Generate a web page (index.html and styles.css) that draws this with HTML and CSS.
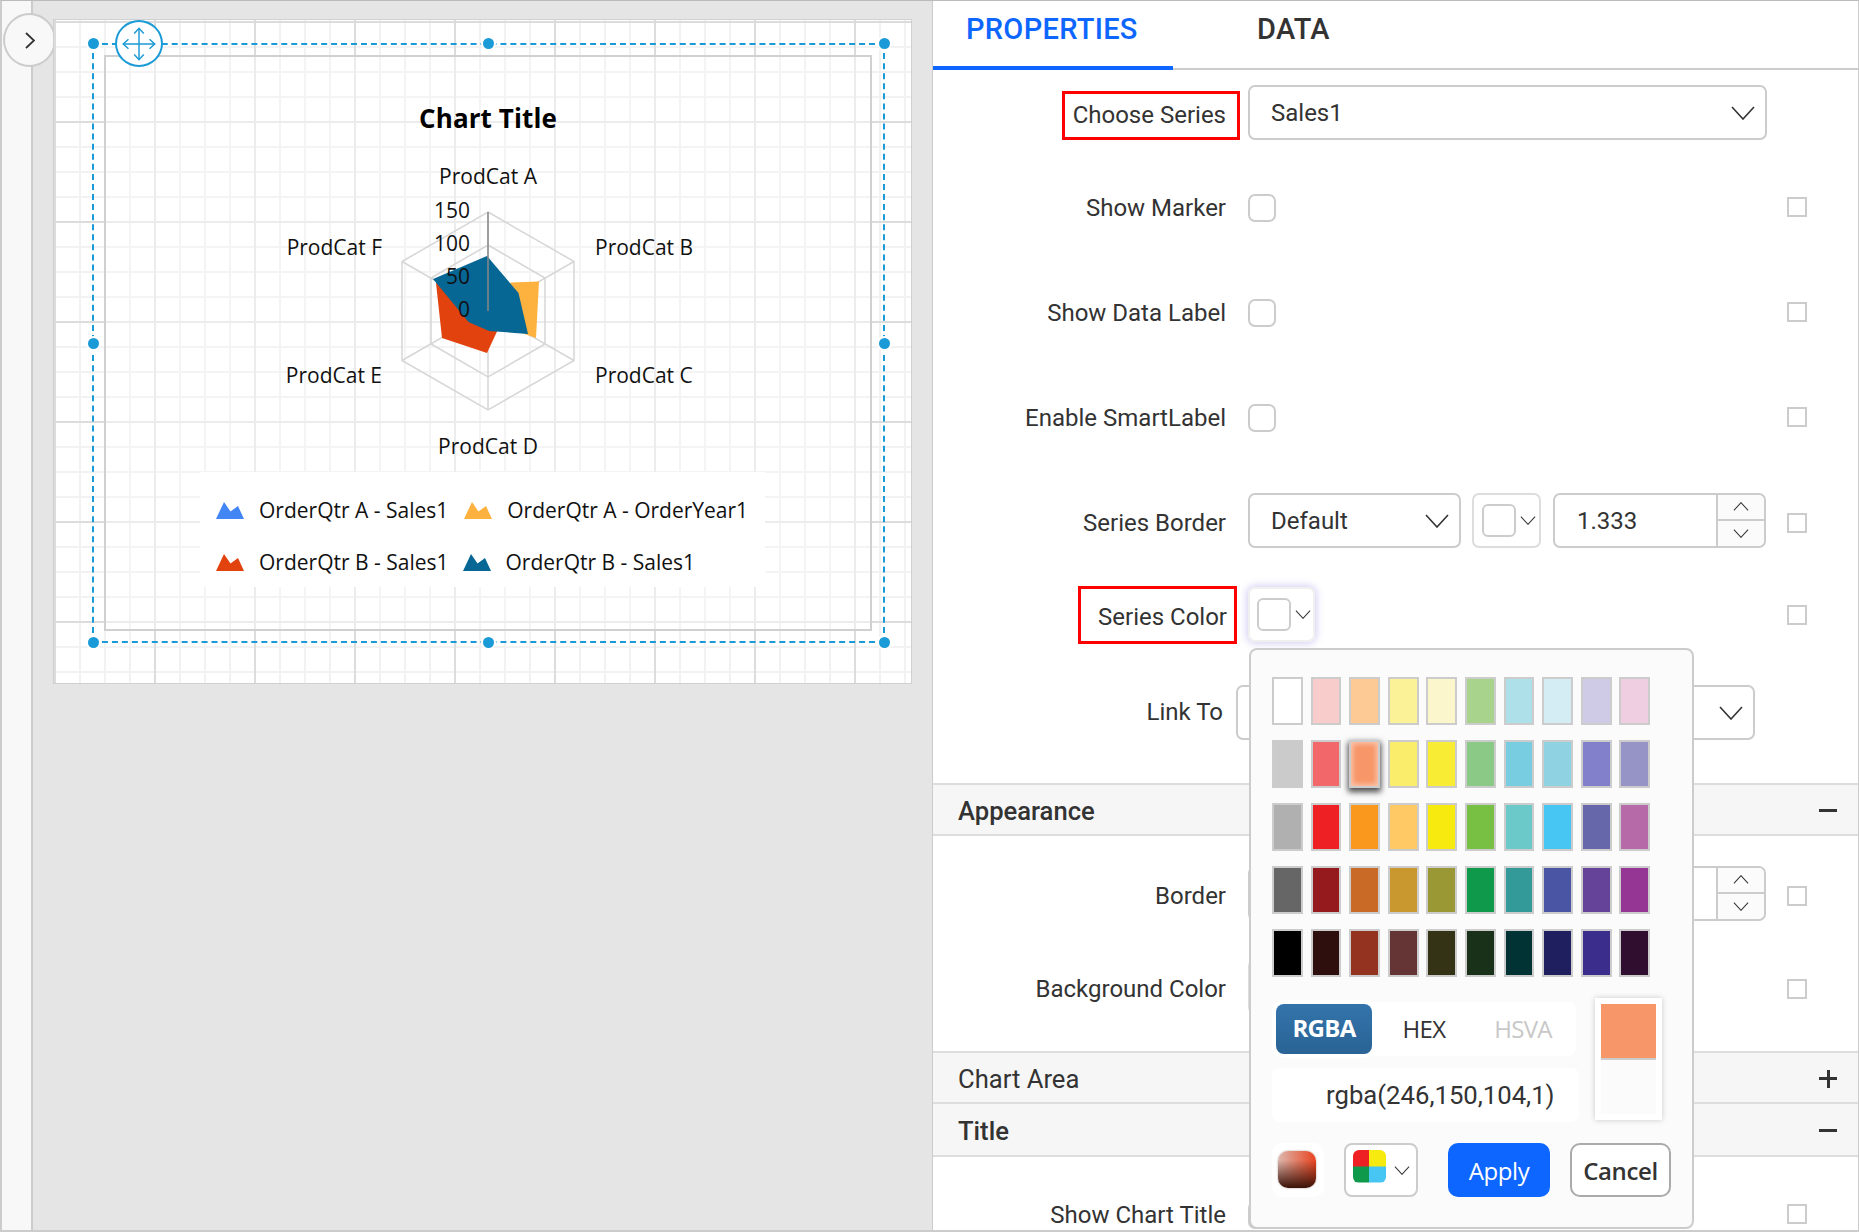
FILE: index.html
```html
<!DOCTYPE html>
<html lang="en">
<head>
    <meta charset="UTF-8">
    <title>Chart Properties</title>
    <link rel="stylesheet" href="styles.css">
</head>
<body>
    <svg class="defs" width="0" height="0">
        <symbol id="chev" viewBox="0 0 24 14"><polyline points="1,1 12,13 23,1" fill="none" stroke="currentColor" stroke-width="1.6"/></symbol>
        <symbol id="mount" viewBox="0 0 28 17"><polygon points="0,17 8,0 14.5,9.5 22,4 28,17" fill="currentColor"/></symbol>
    </svg>
    <div class="app">
        <div class="rail"></div>
        <button class="toggle" type="button"><svg width="10" height="17" viewBox="0 0 10 17"><polyline points="1,1 9,8.5 1,16" fill="none" stroke="#333" stroke-width="1.8"/></svg></button>
        <main class="stage">
            <div class="canvas">
                <div class="page"></div>
                <svg class="chart" width="857" height="663" viewBox="54 20 857 663">
                    <text class="chart-title" x="488" y="128" text-anchor="middle">Chart Title</text>
                    <g class="radar-grid">
                        <polygon points="488,212 574,261.5 574,360.5 488,410 402,360.5 402,261.5"/>
                        <polygon points="488,245 545,278 545,344 488,377 431,344 431,278"/>
                        <line x1="488" y1="212" x2="488" y2="410"/>
                        <line x1="402" y1="261.5" x2="574" y2="360.5"/>
                        <line x1="402" y1="360.5" x2="574" y2="261.5"/>
                    </g>
                    <polygon fill="#fdb240" points="488,300 511,282.5 539,281.5 536,338 500,325"/>
                    <polygon fill="#e2420d" points="436,283 442,338 487,353 500,325 480,290"/>
                    <polygon fill="#066694" points="487,256 518.5,293 528,334 489,331 468.5,322 433,279"/>
                    <line class="radar-axis" x1="488" y1="212" x2="488" y2="311"/>
                    <g class="chart-text">
                        <text x="488" y="184" text-anchor="middle">ProdCat A</text>
                        <text x="595" y="255">ProdCat B</text>
                        <text x="595" y="383">ProdCat C</text>
                        <text x="488" y="454" text-anchor="middle">ProdCat D</text>
                        <text x="382" y="383" text-anchor="end">ProdCat E</text>
                        <text x="382" y="255" text-anchor="end">ProdCat F</text>
                        <text x="470" y="218" text-anchor="end">150</text>
                        <text x="470" y="251" text-anchor="end">100</text>
                        <text x="470" y="284" text-anchor="end">50</text>
                        <text x="470" y="317" text-anchor="end">0</text>
                    </g>
                </svg>
                <div class="legend">
                    <div class="legend-row">
                        <span class="legend-item"><svg class="marker c-blue"><use href="#mount"/></svg>OrderQtr A - Sales1</span>
                        <span class="legend-item"><svg class="marker c-amber"><use href="#mount"/></svg>OrderQtr A - OrderYear1</span>
                    </div>
                    <div class="legend-row tight">
                        <span class="legend-item"><svg class="marker c-red"><use href="#mount"/></svg>OrderQtr B - Sales1</span>
                        <span class="legend-item"><svg class="marker c-teal"><use href="#mount"/></svg>OrderQtr B - Sales1</span>
                    </div>
                </div>
                <div class="selection">
                    <i class="handle h-tl"></i><i class="handle h-tc"></i><i class="handle h-tr"></i>
                    <i class="handle h-ml"></i><i class="handle h-mr"></i>
                    <i class="handle h-bl"></i><i class="handle h-bc"></i><i class="handle h-br"></i>
                </div>
                <div class="mover">
                    <svg width="46" height="46" viewBox="0 0 46 46">
                        <g fill="none" stroke="#1a9ad6" stroke-width="1.5">
                            <path d="M23 7V39M7 23H39"/>
                            <path d="M18 12L23 6.500L28 12M18 34L23 39.500L28 34M12 18L6.500 23L12 28M34 18L39.500 23L34 28"/>
                        </g>
                    </svg>
                </div>
            </div>
        </main>

        <aside class="panel">
            <div class="tabs">
                <div class="tab active">PROPERTIES</div>
                <div class="tab">DATA</div>
            </div>

            <div class="rows">
                <div class="row">
                    <label class="label"><span class="mark mark-choose">Choose Series</span></label>
                    <div class="select wide">Sales1<svg class="chev"><use href="#chev"/></svg></div>
                </div>
                <div class="row">
                    <label class="label">Show Marker</label>
                    <span class="toggle-box"></span>
                    <span class="check"></span>
                </div>
                <div class="row">
                    <label class="label">Show Data Label</label>
                    <span class="toggle-box"></span>
                    <span class="check"></span>
                </div>
                <div class="row">
                    <label class="label">Enable SmartLabel</label>
                    <span class="toggle-box"></span>
                    <span class="check"></span>
                </div>
                <div class="row">
                    <label class="label low">Series Border</label>
                    <div class="select narrow">Default<svg class="chev"><use href="#chev"/></svg></div>
                    <div class="color-btn"><span class="swatch-box"></span><svg class="chev-sm"><use href="#chev"/></svg></div>
                    <div class="spinner">
                        <span class="spin-value">1.333</span>
                        <span class="spin-btns"><span><svg class="chev-sm flip"><use href="#chev"/></svg></span><span><svg class="chev-sm"><use href="#chev"/></svg></span></span>
                    </div>
                    <span class="check low"></span>
                </div>
                <div class="row">
                    <label class="label"><span class="mark mark-color">Series Color</span></label>
                    <div class="color-btn focus"><span class="swatch-box"></span><svg class="chev-sm"><use href="#chev"/></svg></div>
                    <span class="check mid"></span>
                </div>
                <div class="row row-link">
                    <label class="label">Link To</label>
                    <div class="select link"><svg class="chev"><use href="#chev"/></svg></div>
                </div>
            </div>

            <div class="section strong"><span>Appearance</span><i class="minus"></i></div>
            <div class="rows rows-appearance">
                <div class="row">
                    <label class="label low">Border</label>
                    <div class="select narrow">Default<svg class="chev"><use href="#chev"/></svg></div>
                    <div class="color-btn"><span class="swatch-box"></span><svg class="chev-sm"><use href="#chev"/></svg></div>
                    <div class="spinner">
                        <span class="spin-value">1</span>
                        <span class="spin-btns"><span><svg class="chev-sm flip"><use href="#chev"/></svg></span><span><svg class="chev-sm"><use href="#chev"/></svg></span></span>
                    </div>
                    <span class="check low"></span>
                </div>
                <div class="row">
                    <label class="label low">Background Color</label>
                    <div class="color-btn"><span class="swatch-box"></span><svg class="chev-sm"><use href="#chev"/></svg></div>
                    <span class="check low"></span>
                </div>
            </div>
            <div class="section"><span>Chart Area</span><i class="plus"></i></div>
            <div class="section strong"><span>Title</span><i class="minus"></i></div>
            <div class="rows rows-title">
                <div class="row">
                    <label class="label">Show Chart Title</label>
                    <span class="toggle-box"></span>
                    <span class="check"></span>
                </div>
            </div>

            <div class="picker">
                <div class="palette">
                    <span class="sw" style="background:#ffffff"></span><span class="sw" style="background:#f9cccc"></span><span class="sw" style="background:#fdca96"></span><span class="sw" style="background:#fbf197"></span><span class="sw" style="background:#fcf6cd"></span><span class="sw" style="background:#a8d38d"></span><span class="sw" style="background:#aee0e9"></span><span class="sw" style="background:#d4ecf3"></span><span class="sw" style="background:#cfcbe6"></span><span class="sw" style="background:#efcee2"></span>
                    <span class="sw" style="background:#cbcbcb"></span><span class="sw" style="background:#f2676a"></span><span class="sw selected" style="background:#f79668"></span><span class="sw" style="background:#f9ed6b"></span><span class="sw" style="background:#f8ec34"></span><span class="sw" style="background:#8bc987"></span><span class="sw" style="background:#78cde0"></span><span class="sw" style="background:#8fd3e2"></span><span class="sw" style="background:#827fcb"></span><span class="sw" style="background:#9694c7"></span>
                    <span class="sw" style="background:#b0b0b0"></span><span class="sw" style="background:#ee2024"></span><span class="sw" style="background:#fa981d"></span><span class="sw" style="background:#ffc966"></span><span class="sw" style="background:#f6ea0e"></span><span class="sw" style="background:#78c044"></span><span class="sw" style="background:#6bc9c9"></span><span class="sw" style="background:#48c6f3"></span><span class="sw" style="background:#6666aa"></span><span class="sw" style="background:#b66ba8"></span>
                    <span class="sw" style="background:#666666"></span><span class="sw" style="background:#941a1e"></span><span class="sw" style="background:#c96a27"></span><span class="sw" style="background:#c9982f"></span><span class="sw" style="background:#999835"></span><span class="sw" style="background:#0e9a4a"></span><span class="sw" style="background:#339999"></span><span class="sw" style="background:#4a55a4"></span><span class="sw" style="background:#654399"></span><span class="sw" style="background:#963694"></span>
                    <span class="sw" style="background:#000000"></span><span class="sw" style="background:#2e0f0e"></span><span class="sw" style="background:#94331f"></span><span class="sw" style="background:#653434"></span><span class="sw" style="background:#353315"></span><span class="sw" style="background:#183118"></span><span class="sw" style="background:#023334"></span><span class="sw" style="background:#1f1e5f"></span><span class="sw" style="background:#3b2d8b"></span><span class="sw" style="background:#2f0e30"></span>
                </div>
                <div class="value-area">
                    <div class="value-left">
                        <div class="modes">
                            <span class="mode active">RGBA</span>
                            <span class="mode">HEX</span>
                            <span class="mode off">HSVA</span>
                        </div>
                        <div class="value-input">rgba(246,150,104,1)</div>
                    </div>
                    <div class="preview"><span class="preview-new"></span></div>
                </div>
                <div class="picker-foot">
                    <span class="grad-btn"><i class="grad-icon"></i></span>
                    <span class="pal-btn"><i class="pal-icon"></i><svg class="chev-sm"><use href="#chev"/></svg></span>
                    <button class="btn-apply" type="button">Apply</button>
                    <button class="btn-cancel" type="button">Cancel</button>
                </div>
            </div>
        </aside>
    </div>
</body>
</html>
```

FILE: styles.css
```css
* {
    box-sizing: border-box;
}
html, body {
    margin: 0;
    height: 100%;
    overflow: hidden;
}
body {
    font-family: Roboto, sans-serif;
    color: #333;
    background: #e5e5e5;
}
.defs {
    position: absolute;
}
.app {
    position: relative;
    display: flex;
    width: 1859px;
    height: 1232px;
    overflow: hidden;
    border-top: 1px solid #bbb;
    border-bottom: 2px solid #ccc;
    border-left: 2px solid #ccc;
    border-right: 1px solid #ccc;
}

/* left side */
.rail {
    width: 31px;
    flex: none;
    background: #f8f8f8;
    border-right: 2px solid #ccc;
}
.toggle {
    position: absolute;
    left: 1px;
    top: 12px;
    width: 53px;
    height: 54px;
    padding: 0;
    display: flex;
    align-items: center;
    justify-content: center;
    border: 2px solid #ccc;
    border-radius: 50%;
    background: #f8f8f8;
}
.stage {
    width: 899px;
    flex: none;
    padding: 19px 0 0 21px;
    background: #e5e5e5;
}
.canvas {
    position: relative;
    width: 857px;
    height: 663px;
    background-color: #fff;
    background-image:
        linear-gradient(to right, #dcdcdc 2px, transparent 2px),
        linear-gradient(to bottom, #dcdcdc 2px, transparent 2px),
        linear-gradient(to right, #f2f2f2 2px, transparent 2px),
        linear-gradient(to bottom, #f2f2f2 2px, transparent 2px);
    background-size: 100px 100%, 100% 100px, 25px 100%, 100% 25px;
    background-position: 0 0, 0 1px, 0 0, 0 1px;
    box-shadow: 0 0 0 1px #d0d0d0;
}
.page {
    position: absolute;
    left: 50px;
    top: 35px;
    width: 768px;
    height: 576px;
    border: 2px solid #d0d0d0;
    background-color: #fff;
    background-image:
        linear-gradient(to right, #ececec 2px, transparent 2px),
        linear-gradient(to bottom, #ececec 2px, transparent 2px),
        linear-gradient(to right, #f4f4f4 2px, transparent 2px),
        linear-gradient(to bottom, #f4f4f4 2px, transparent 2px);
    background-size: 100px 100%, 100% 100px, 25px 100%, 100% 25px;
    background-position: -52px 0, 0 -36px, -2px 0, 0 -11px;
}
.chart {
    position: absolute;
    left: 0;
    top: 0;
}
.chart-title {
    font: 700 26px "Open Sans", sans-serif;
    letter-spacing: 0.1px;
    fill: #000;
}
.chart-text text {
    font: 400 21px "Open Sans", sans-serif;
    fill: #111;
}
.radar-grid {
    fill: none;
    stroke: #d6d6d6;
    stroke-width: 1.500;
}
.radar-axis {
    stroke: #888;
    stroke-width: 1.500;
}
.legend {
    position: absolute;
    left: 146px;
    top: 452px;
    width: 565px;
    height: 115px;
    padding-top: 12px;
    background: #fff;
}
.legend-row {
    display: flex;
    align-items: center;
    gap: 16px;
    height: 52px;
    padding-left: 16px;
    font: 400 21px "Open Sans", sans-serif;
    color: #111;
}
.legend-row.tight {
    gap: 14px;
}
.legend-item {
    display: flex;
    align-items: center;
    gap: 15px;
}
.marker {
    width: 28px;
    height: 17px;
}
.c-blue { color: #4285f4; }
.c-amber { color: #fdb240; }
.c-red { color: #e2420d; }
.c-teal { color: #066694; }
.selection {
    position: absolute;
    left: 38px;
    top: 23px;
    width: 793px;
    height: 600px;
    border: 2px dashed #1a9ad6;
}
.handle {
    position: absolute;
    width: 11px;
    height: 11px;
    border-radius: 50%;
    background: #1a9ad6;
    box-shadow: 0 0 0 2px #fff;
}
.h-tl, .h-tc, .h-tr { top: -7px; }
.h-ml, .h-mr { top: 292.500px; }
.h-bl, .h-bc, .h-br { bottom: -7px; }
.h-tl, .h-ml, .h-bl { left: -6px; }
.h-tc, .h-bc { left: 388.500px; }
.h-tr, .h-mr, .h-br { right: -7px; }
.mover {
    position: absolute;
    left: 61px;
    top: 0;
    width: 48px;
    height: 47px;
    display: flex;
    align-items: center;
    justify-content: center;
    border: 2px solid #1a9ad6;
    border-radius: 50%;
    background: #fff;
}

/* right panel */
.panel {
    position: relative;
    flex: 1;
    background: #fff;
    border-left: 1px solid #ccc;
}
.tabs {
    display: flex;
    height: 69px;
    border-bottom: 2px solid #ccc;
}
.tab {
    height: 69px;
    padding: 11px 0 0;
    font-size: 29px;
    font-weight: 500;
    letter-spacing: 0.3px;
    color: #333;
    margin-left: 84px;
}
.tab.active {
    width: 240px;
    margin-left: 0;
    padding-left: 33px;
    color: #0d66ff;
    border-bottom: 4px solid #0d66ff;
}
.rows {
    display: grid;
    padding-top: 14px;
    grid-template-rows: 96px 105px 105px 102px 94px 98px 99px;
}
.rows-appearance {
    padding-top: 29px;
    grid-template-rows: 93px 93px;
}
.rows-title {
    padding-top: 30px;
}
.row {
    display: flex;
    align-items: center;
    height: 56px;
    padding-right: 51px;
    font-size: 24px;
}
.label {
    width: 315px;
    flex: none;
    padding-right: 22px;
    text-align: right;
    white-space: nowrap;
}
.label.low {
    margin-top: 5px;
}
.mark {
    display: inline-flex;
    align-items: center;
    border: 3px solid #f00;
}
.mark-choose {
    height: 49px;
    margin-top: 6px;
    margin-right: -14px;
    padding: 0 11px 0 8px;
}
.mark-color {
    height: 58px;
    margin-top: 2px;
    margin-right: -11px;
    padding: 3px 7px 0 17px;
}
.row-link .label {
    width: 303px;
    padding-right: 13px;
}
.select {
    position: relative;
    display: flex;
    align-items: center;
    justify-content: space-between;
    height: 55px;
    padding: 2px 10px 0 21px;
    border: 2px solid #ccc;
    border-radius: 7px;
    background: #fff;
}
.select.wide {
    width: 519px;
}
.select.narrow {
    width: 213px;
}
.select.link {
    width: 519px;
    justify-content: flex-end;
}
.chev {
    width: 24px;
    height: 14px;
    color: #333;
}
.chev-sm {
    width: 16px;
    height: 9px;
    color: #333;
}
.flip {
    transform: scaleY(-1);
}
.toggle-box {
    width: 28px;
    height: 28px;
    border: 2px solid #ccc;
    border-radius: 7px;
}
.check {
    width: 20px;
    height: 20px;
    margin-left: auto;
    margin-top: -2px;
    border: 2px solid #ccc;
}
.check.low {
    margin-top: 5px;
}
.check.mid {
    margin-top: 2px;
}
.color-btn {
    display: flex;
    align-items: center;
    gap: 4px;
    width: 69px;
    height: 55px;
    margin-left: 11px;
    padding-left: 8px;
    border: 2px solid #ddd;
    border-radius: 7px;
}
.swatch-box {
    flex: none;
    width: 34px;
    height: 33px;
    border: 2px solid #ccc;
    border-radius: 6px;
}
.color-btn.focus {
    margin-left: 0;
    padding-left: 7px;
    width: 67px;
    border-color: #f0f0f0;
    box-shadow: 0 0 7px 2px rgba(120, 100, 220, 0.28);
}
.rows-appearance .row:last-child .color-btn {
    margin-left: 0;
}
.spinner {
    display: flex;
    align-items: stretch;
    width: 213px;
    height: 55px;
    margin-left: 12px;
    border: 2px solid #ccc;
    border-radius: 7px;
}
.spin-value {
    flex: 1;
    display: flex;
    align-items: center;
    padding: 2px 0 0 22px;
}
.spin-btns {
    width: 48px;
    display: flex;
    flex-direction: column;
    border-left: 2px solid #ccc;
    background: #fbfbfb;
    border-radius: 0 6px 6px 0;
}
.spin-btns span {
    flex: 1;
    display: flex;
    align-items: center;
    justify-content: center;
}
.spin-btns span + span {
    border-top: 2px solid #ccc;
}
.section {
    display: flex;
    align-items: center;
    justify-content: space-between;
    height: 53px;
    padding: 2px 21px 0 25px;
    font-size: 25.600px;
    background: #f6f6f6;
    border-top: 2px solid #ddd;
    border-bottom: 2px solid #ddd;
}
.section + .section {
    border-top: none;
}
.section.strong {
    font-weight: 500;
}
.minus, .plus {
    position: relative;
    width: 18px;
    height: 3px;
    background: #333;
}
.plus::after {
    content: "";
    position: absolute;
    left: 7.500px;
    top: -7.500px;
    width: 3px;
    height: 18px;
    background: #333;
}

/* color picker popover */
.picker {
    position: absolute;
    left: 316px;
    top: 647px;
    width: 445px;
    height: 581px;
    padding: 27px 21px 0 21px;
    border: 2px solid #ccc;
    border-radius: 8px;
    background: #fbfbfb;
}
.palette {
    display: grid;
    grid-template-columns: repeat(10, 30.800px);
    grid-auto-rows: 48px;
    column-gap: 7.800px;
    row-gap: 15px;
}
.sw {
    border: 2px solid #ccc;
}
.sw.selected {
    box-shadow: 0 3px 6px 1px rgba(0, 0, 0, 0.7), inset 0 0 5px 2px rgba(255, 255, 255, 0.45);
}
.value-area {
    display: flex;
    gap: 16px;
    margin-top: 21px;
}
.value-left {
    width: 307px;
}
.modes {
    display: flex;
    align-items: center;
    width: 304px;
    height: 54px;
    margin-top: 4px;
    padding-bottom: 2px;
    background: #fff;
    border-radius: 8px;
    font: 400 24px "Open Sans", sans-serif;
    letter-spacing: -0.7px;
}
.mode {
    width: 100px;
    text-align: center;
    color: #333;
    transform: translateX(2px);
}
.mode.active {
    width: 96px;
    height: 50px;
    margin: 2px 0 0 4px;
    line-height: 48px;
    font-weight: 700;
    color: #fff;
    border-radius: 8px;
    background: linear-gradient(#3374ab, #2a6395);
    box-shadow: 0 0 0 4px #fff;
    transform: none;
}
.mode.off {
    color: #c8c8c8;
    transform: translateX(1px);
}
.value-input {
    display: flex;
    align-items: center;
    height: 54px;
    margin-top: 12px;
    padding-left: 54px;
    font-size: 25.700px;
    background: #fff;
    border-radius: 8px;
}
.preview {
    width: 67px;
    height: 122px;
    padding: 6px;
    background: #fff;
    box-shadow: 0 0 6px rgba(0, 0, 0, 0.2);
}
.preview-new {
    display: block;
    height: 110px;
    background: linear-gradient(#f79668 54px, #ccc 54px, #ccc 56px, #fbfbfb 56px);
}
.picker-foot {
    display: flex;
    align-items: stretch;
    height: 54px;
    margin-top: 21px;
}
.grad-btn {
    width: 52px;
    padding: 8px 8px 8px 6px;
    background: #fff;
    border-radius: 10px;
}
.grad-icon {
    display: block;
    height: 37px;
    border-radius: 10px;
    background:
        linear-gradient(to bottom, rgba(60, 15, 5, 0) 25%, #3a1208 100%),
        linear-gradient(to right, #dcb8ae, #e8431f);
    box-shadow: 0 0 2px rgba(80, 40, 30, 0.5);
}
.pal-btn {
    display: flex;
    align-items: center;
    width: 74px;
    margin-left: 20px;
    padding-left: 7px;
    border: 2px solid #ccc;
    border-radius: 8px;
    background: #fff;
    gap: 8px;
}
.pal-icon {
    width: 33px;
    height: 33px;
    margin-top: -8px;
    border-radius: 6px;
    background:
        linear-gradient(to right, #ee2024 50%, #f6ea0e 50%) top / 100% 50% no-repeat,
        linear-gradient(to right, #0e9a4a 50%, #48c6f3 50%) bottom / 100% 50% no-repeat;
}
.btn-apply, .btn-cancel {
    width: 101px;
    padding: 0;
    border-radius: 10px;
    font: 400 24px "Open Sans", sans-serif;
    letter-spacing: -0.4px;
}
.btn-apply {
    width: 102px;
    margin-left: 30px;
    color: #fff;
    background: #0d66ff;
    border: none;
}
.btn-cancel {
    margin-left: 20px;
    font-weight: 600;
    color: #333;
    background: #fff;
    border: 2px solid #aaa;
}
```
